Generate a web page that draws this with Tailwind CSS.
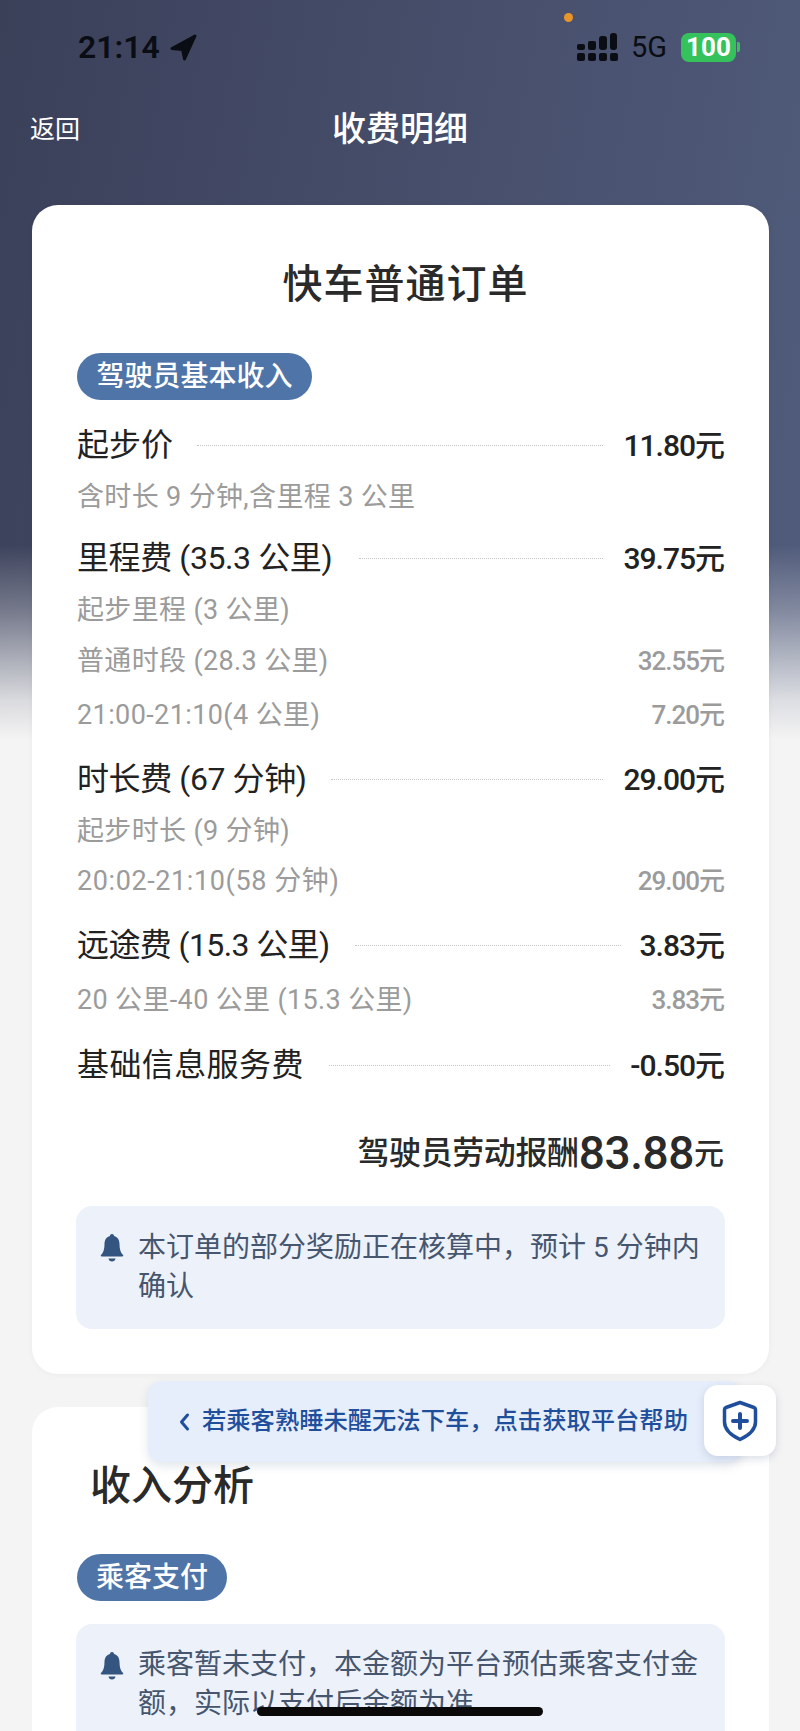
<!doctype html>
<html lang="zh">
<head>
  <meta charset="UTF-8">
  <title>收费明细</title>
  <script src="https://cdn.jsdelivr.net/npm/@tailwindcss/browser@4"></script>
</head>
<body>
  <div class="relative w-[800px] h-[1731px] overflow-hidden bg-[#f4f4f4] font-['Roboto','Noto_Sans_CJK_SC',sans-serif]">
    <!-- header background fades out behind the first card -->
    <div class="absolute inset-x-0 top-0 h-[740px] bg-[linear-gradient(to_bottom,transparent_0,transparent_545px,rgba(244,244,244,0.3)_610px,rgba(244,244,244,0.65)_667px,rgba(244,244,244,0.85)_700px,#f4f4f4_740px),linear-gradient(100deg,#3b4059,#515c7c)]"></div>
    <div class="absolute left-[564px] top-[13px] w-[9px] h-[9px] rounded-full bg-[#e8952a]"></div>

    <div class="relative">
      <!-- status bar -->
      <div class="flex items-center h-[94px] pl-[78px] pr-[60px]">
        <span class="text-[32px] leading-none font-semibold text-[#0b0d14]">21:14</span>
        <svg class="ml-[9px]" width="28" height="28" viewBox="0 0 28 28"><path d="M26 3 3 15.500 13.500 16.500 15.500 26z" fill="#0b0d14" stroke="#0b0d14" stroke-width="3" stroke-linejoin="round"/></svg>
        <div class="ml-auto flex items-end gap-[3px] h-[28px]">
          <div class="flex flex-col justify-end gap-[3px]"><div class="w-[8px] h-[6px] rounded-[2px] bg-[#0b0d14]"></div><div class="w-[8px] h-[8px] rounded-[2px] bg-[#0b0d14]"></div></div>
          <div class="flex flex-col justify-end gap-[3px]"><div class="w-[8px] h-[9px] rounded-[2px] bg-[#0b0d14]"></div><div class="w-[8px] h-[8px] rounded-[2px] bg-[#0b0d14]"></div></div>
          <div class="flex flex-col justify-end gap-[3px]"><div class="w-[8px] h-[14px] rounded-[3px] bg-[#0b0d14]"></div><div class="w-[8px] h-[8px] rounded-[2px] bg-[#0b0d14]"></div></div>
          <div class="flex flex-col justify-end gap-[3px]"><div class="w-[7px] h-[17px] rounded-[3px] bg-[#0b0d14]"></div><div class="w-[8px] h-[8px] rounded-[2px] bg-[#0b0d14]"></div></div>
        </div>
        <span class="ml-[13px] text-[29px] leading-none text-[#0b0d14]">5G</span>
        <div class="ml-[14px] flex items-center justify-center w-[55px] h-[29px] rounded-[8px] bg-[#35c25c] text-[26px] leading-none font-bold text-white">100</div>
        <div class="ml-[1px] w-[3px] h-[10px] rounded-r-[2px] bg-[#35c25c]"></div>
      </div>

      <!-- nav -->
      <div class="relative flex items-center justify-center h-[70px]">
        <span class="absolute left-[30px] text-[25px] leading-none text-white">返回</span>
        <span class="text-[34px] leading-none font-medium text-white">收费明细</span>
      </div>

      <!-- order card -->
      <div class="ml-[32px] mr-[31px] mt-[41px] h-[1169px] rounded-[26px] bg-white px-[45px] pt-[58px] shadow-[0_1px_6px_rgba(0,0,0,0.04)]">
        <h1 class="pl-[10px] text-center text-[40px] leading-[44px] font-medium text-[#2a2a2a] tracking-[1px]">快车普通订单</h1>
        <div class="mt-[46px] flex w-[235px] h-[47px] items-center justify-center rounded-full bg-[#4f75a8] text-[28px] leading-none font-medium text-white whitespace-nowrap">驾驶员基本收入</div>

        <div class="mt-[25px] flex items-center h-[40px] text-[#222]">
          <span class="text-[32px] whitespace-nowrap">起步价</span>
          <div class="flex-1 ml-[24px] mr-[20px] border-t border-dotted border-[#c4c4c4]"></div>
          <span class="text-[30px] font-medium tracking-[-1px]">11.80元</span>
        </div>
        <div class="mt-[12px] flex items-center h-[40px] text-[27px] tracking-[0.35px] text-[#9b9b9b]">含时长 9 分钟,含里程 3 公里</div>

        <div class="mt-[21px] flex items-center h-[40px] text-[#222]">
          <span class="text-[32px] tracking-[-0.4px] whitespace-nowrap">里程费 (35.3 公里)</span>
          <div class="flex-1 ml-[27px] mr-[20px] border-t border-dotted border-[#c4c4c4]"></div>
          <span class="text-[30px] font-medium tracking-[-1px]">39.75元</span>
        </div>
        <div class="mt-[12px] flex items-center h-[40px] text-[27px] tracking-[0.35px] text-[#9b9b9b]">起步里程 (3 公里)</div>
        <div class="mt-[11px] flex items-center justify-between h-[40px] text-[27px] text-[#9b9b9b]">
          <span class="tracking-[0.35px]">普通时段 (28.3 公里)</span><span class="text-[26px] tracking-[-1px] font-medium">32.55元</span>
        </div>
        <div class="mt-[14px] flex items-center justify-between h-[40px] text-[27px] text-[#9b9b9b]">
          <span class="tracking-[0.4px]">21:00-21:10(4 公里)</span><span class="text-[26px] tracking-[-1px] font-medium">7.20元</span>
        </div>

        <div class="mt-[24px] flex items-center h-[40px] text-[#222]">
          <span class="text-[32px] tracking-[-0.4px] whitespace-nowrap">时长费 (67 分钟)</span>
          <div class="flex-1 ml-[24px] mr-[20px] border-t border-dotted border-[#c4c4c4]"></div>
          <span class="text-[30px] font-medium tracking-[-1px]">29.00元</span>
        </div>
        <div class="mt-[12px] flex items-center h-[40px] text-[27px] tracking-[0.35px] text-[#9b9b9b]">起步时长 (9 分钟)</div>
        <div class="mt-[10px] flex items-center justify-between h-[40px] text-[27px] text-[#9b9b9b]">
          <span class="tracking-[0.6px]">20:02-21:10(58 分钟)</span><span class="text-[26px] tracking-[-1px] font-medium">29.00元</span>
        </div>

        <div class="mt-[24px] flex items-center h-[40px] text-[#222]">
          <span class="text-[32px] tracking-[-0.6px] whitespace-nowrap">远途费 (15.3 公里)</span>
          <div class="flex-1 ml-[25px] mr-[19px] border-t border-dotted border-[#c4c4c4]"></div>
          <span class="text-[30px] font-medium tracking-[-1px]">3.83元</span>
        </div>
        <div class="mt-[15px] flex items-center justify-between h-[40px] text-[27px] text-[#9b9b9b]">
          <span class="tracking-[0.35px]">20 公里-40 公里 (15.3 公里)</span><span class="text-[26px] tracking-[-1px] font-medium">3.83元</span>
        </div>

        <div class="mt-[25px] flex items-center h-[40px] text-[#222]">
          <span class="text-[32px] tracking-[0.4px] whitespace-nowrap">基础信息服务费</span>
          <div class="flex-1 ml-[25px] mr-[20px] border-t border-dotted border-[#c4c4c4]"></div>
          <span class="text-[30px] font-medium tracking-[-1px]">-0.50元</span>
        </div>

        <div class="mt-[43px] flex items-center justify-end h-[50px] text-[#2a2a2a]">
          <span class="text-[32px] font-medium tracking-[-0.4px] whitespace-nowrap">驾驶员劳动报酬</span>
          <span class="text-[46px] font-medium tracking-[-0.4px]">83.88</span>
          <span class="text-[30px] font-medium">元</span>
        </div>

        <div class="mt-[28px] -mx-[1px] flex h-[123px] gap-[14px] rounded-[16px] bg-[#edf1fa] pl-[24px] pr-[20px] pt-[22px]">
          <svg class="mt-[6px] shrink-0" width="24" height="28" viewBox="0 0 24 28"><path d="M12 0c-1.300 0-2 .9-2 2C6 3 4.500 6.500 4.500 10c0 5-1 8.500-3.500 11-.6.700-.2 1.500.7 1.500h20.600c.9 0 1.300-.8.7-1.500-2.500-2.500-3.500-6-3.500-11 0-3.500-1.500-7-5.500-8 0-1.100-.7-2-2-2zM8.500 24.500c.2 1.800 1.700 3 3.500 3s3.300-1.200 3.500-3z" fill="#33557f"/></svg>
          <p class="text-[28px] leading-[39px] text-[#46566f]">本订单的部分奖励正在核算中，预计 5 分钟内确认</p>
        </div>
      </div>

      <!-- income card -->
      <div class="ml-[32px] mr-[31px] mt-[33px] h-[400px] rounded-[26px] bg-white pt-[57px] pl-[45px] pr-[45px]">
        <h2 class="ml-[13px] text-[41px] leading-[44px] font-medium text-[#2a2a2a]">收入分析</h2>
        <div class="mt-[46px] flex w-[150px] h-[47px] items-center justify-center rounded-full bg-[#4f75a8] text-[28px] leading-none font-medium text-white">乘客支付</div>
        <div class="mt-[23px] -mx-[1px] flex h-[160px] gap-[14px] rounded-[16px] bg-[#edf1fa] pl-[24px] pr-[20px] pt-[21px]">
          <svg class="mt-[7px] shrink-0" width="24" height="28" viewBox="0 0 24 28"><path d="M12 0c-1.300 0-2 .9-2 2C6 3 4.500 6.500 4.500 10c0 5-1 8.500-3.500 11-.6.700-.2 1.500.7 1.500h20.600c.9 0 1.300-.8.7-1.500-2.500-2.500-3.500-6-3.500-11 0-3.500-1.500-7-5.500-8 0-1.100-.7-2-2-2zM8.500 24.500c.2 1.800 1.700 3 3.500 3s3.300-1.200 3.500-3z" fill="#33557f"/></svg>
          <p class="text-[28px] leading-[39px] text-[#46566f]">乘客暂未支付，本金额为平台预估乘客支付金额，实际以支付后金额为准</p>
        </div>
      </div>
    </div>

    <!-- floating help banner -->
    <div class="absolute left-[148px] top-[1381px] flex w-[594px] h-[81px] items-center rounded-[14px] bg-[#e6eefb] pl-[30px] shadow-[0_4px_10px_rgba(60,80,120,0.15)]">
      <svg width="12" height="20" viewBox="0 0 12 20"><path d="M9.500 3 3.500 10l6 7" fill="none" stroke="#1f4f9c" stroke-width="3" stroke-linecap="round" stroke-linejoin="round"/></svg>
      <span class="ml-[12px] text-[24.300px] leading-none font-medium text-[#1f4f9c] whitespace-nowrap">若乘客熟睡未醒无法下车，点击获取平台帮助</span>
    </div>
    <div class="absolute left-[704px] top-[1385px] flex w-[72px] h-[71px] items-center justify-center rounded-[14px] bg-white shadow-[0_3px_8px_rgba(60,80,120,0.18)]">
      <svg width="36" height="42" viewBox="0 0 36 42"><path d="M18 2.500 32 7.500c.8.300 1.500 1 1.500 2V22c0 7.500-7 13.500-15.500 17.500C9.500 35.500 2.500 29.500 2.500 22V9.500c0-1 .7-1.700 1.500-2z" fill="none" stroke="#1f4f9c" stroke-width="3.500" stroke-linejoin="round"/><path d="M18 14v14M11 21h14" fill="none" stroke="#1f4f9c" stroke-width="4" stroke-linecap="round"/></svg>
    </div>

    <!-- home indicator -->
    <div class="absolute left-[257px] top-[1707px] w-[286px] h-[9px] rounded-full bg-[#0a0a0a]"></div>
  </div>
</body>
</html>
